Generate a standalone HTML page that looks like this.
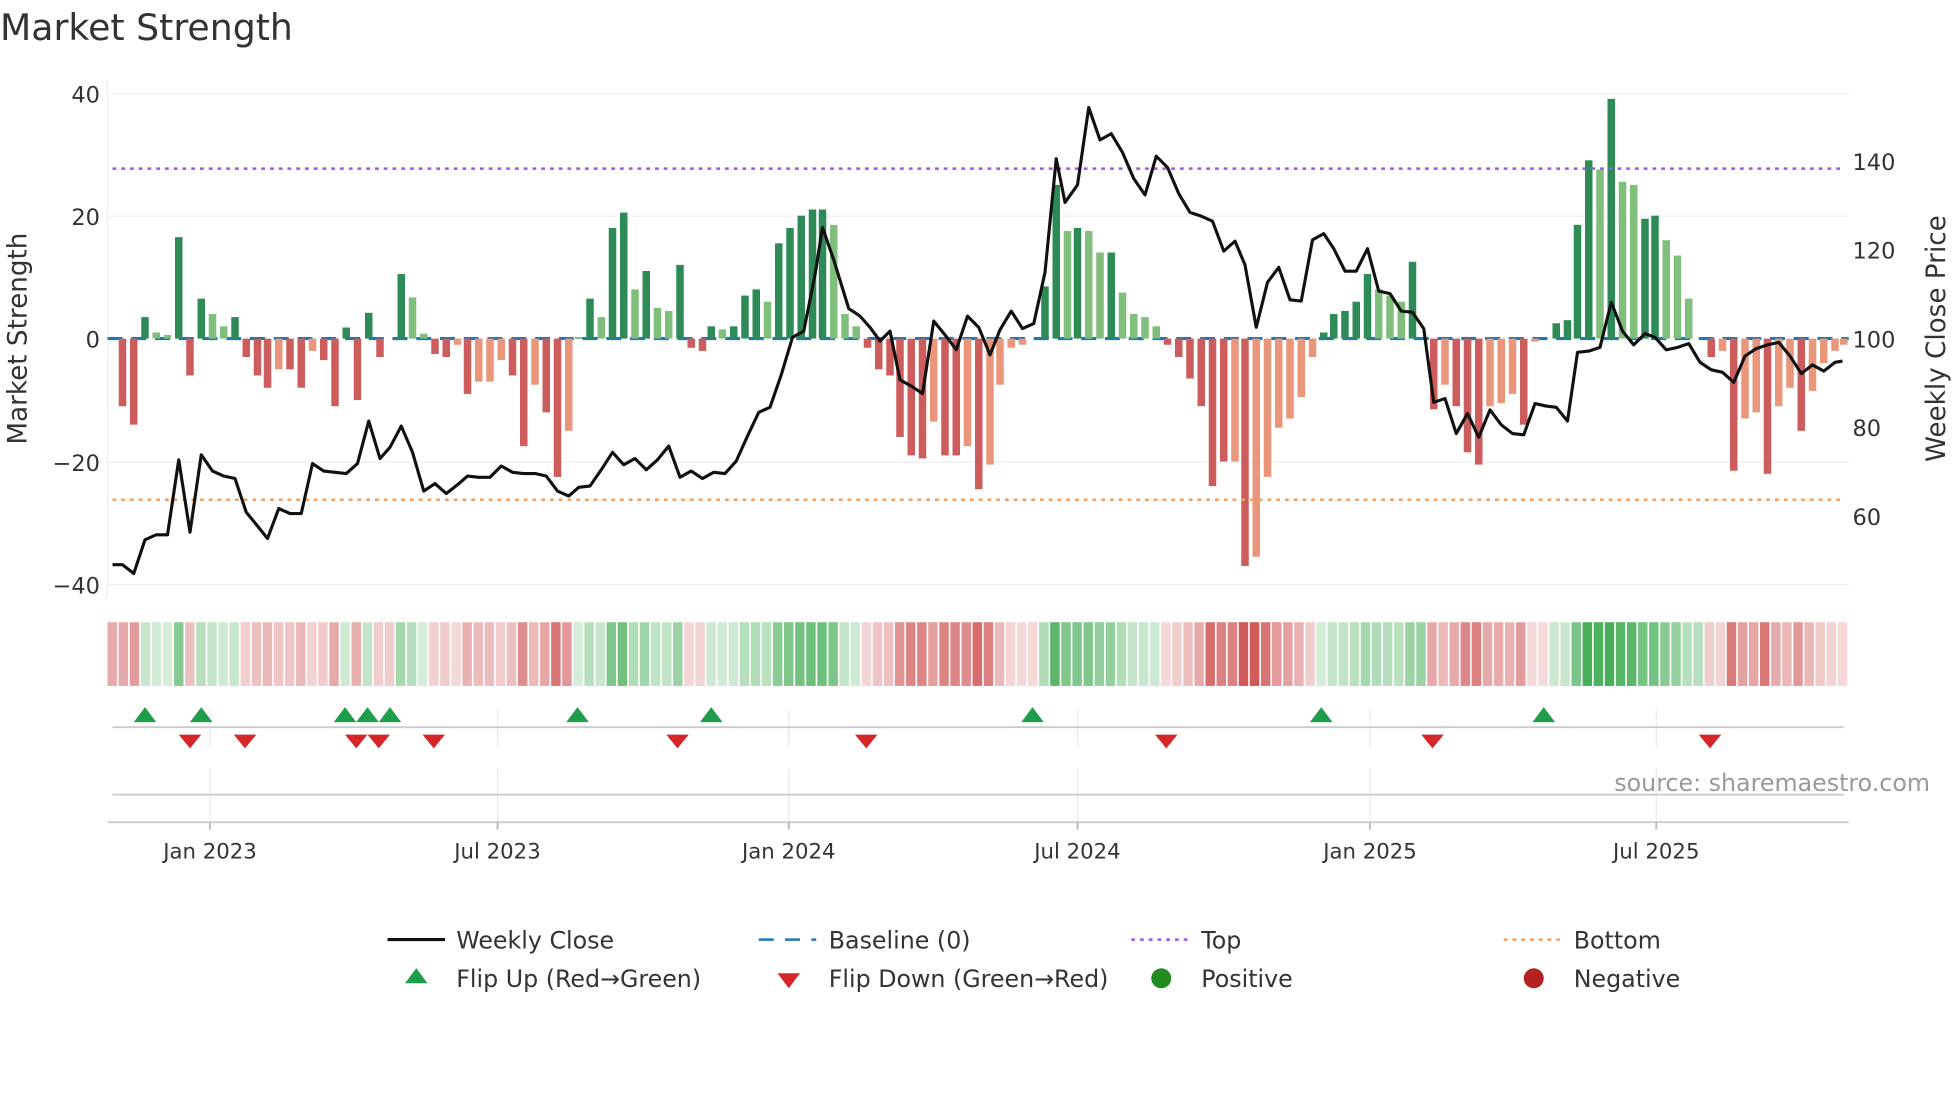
<!DOCTYPE html>
<html><head><meta charset="utf-8">
<style>
html,body{margin:0;padding:0;background:#fff;}
svg{display:block;font-family:"DejaVu Sans","Liberation Sans",sans-serif;}
</style></head>
<body>
<svg id="s" width="1960" height="1102" viewBox="0 0 1568 882" preserveAspectRatio="none" xmlns="http://www.w3.org/2000/svg">
<text x="0" y="32" font-size="29" fill="#333">Market Strength</text>
<g stroke="#eceef4" stroke-width="1">
<line x1="86" y1="75" x2="1479" y2="75"/><line x1="86" y1="173" x2="1479" y2="173"/>
<line x1="86" y1="370" x2="1479" y2="370"/><line x1="86" y1="468" x2="1479" y2="468"/>
<line x1="86" y1="65" x2="86" y2="478"/>
</g>
<g font-size="18" fill="#333" text-anchor="end">
<text x="80" y="82">40</text><text x="80" y="180">20</text><text x="80" y="278">0</text><text x="80" y="377">−20</text><text x="80" y="475">−40</text>
</g>
<g font-size="18" fill="#333">
<text x="1482" y="136">140</text><text x="1482" y="207">120</text><text x="1482" y="278">100</text><text x="1482" y="349">80</text><text x="1482" y="420">60</text>
</g>
<text transform="translate(21,271) rotate(-90)" font-size="21" fill="#333" text-anchor="middle">Market Strength</text>
<text transform="translate(1556,271) rotate(-90)" font-size="21" fill="#333" text-anchor="middle">Weekly Close Price</text>
<line x1="86" y1="271" x2="1479" y2="271" stroke="#1f77b4" stroke-width="2.5" stroke-dasharray="12,7"/>
<g id="bars"></g>
<line x1="90" y1="135" x2="1475" y2="135" stroke="#9b59e0" stroke-width="2" stroke-dasharray="3,4"/>
<line x1="90" y1="400" x2="1475" y2="400" stroke="#f0a060" stroke-width="2" stroke-dasharray="3,4"/>
<polyline id="price" fill="none" stroke="#111" stroke-width="2.5" stroke-linejoin="round"/>
<g id="heat"></g>
<g id="grid2" stroke="#e8eaf0" stroke-width="1"></g>
<line x1="90" y1="582" x2="1475" y2="582" stroke="#ccc" stroke-width="1.5"/>
<line x1="90" y1="636" x2="1475" y2="636" stroke="#ccc" stroke-width="1.5"/>
<line x1="86" y1="658" x2="1479" y2="658" stroke="#ccc" stroke-width="1.5"/>
<g id="marks"></g>
<text x="1544" y="633" font-size="19" fill="#999" text-anchor="end">source: sharemaestro.com</text>
<g id="ticks" font-size="17" fill="#333" text-anchor="middle"></g>
<g font-size="19" fill="#333">
<line x1="310" y1="752" x2="356" y2="752" stroke="#111" stroke-width="2.5"/><text x="365" y="759">Weekly Close</text>
<line x1="607" y1="752" x2="653" y2="752" stroke="#1f77b4" stroke-width="2" stroke-dasharray="12,9"/><text x="663" y="759">Baseline (0)</text>
<line x1="905" y1="752" x2="951" y2="752" stroke="#9b59e0" stroke-width="2" stroke-dasharray="3,4"/><text x="961" y="759">Top</text>
<line x1="1203" y1="752" x2="1249" y2="752" stroke="#f0a060" stroke-width="2" stroke-dasharray="3,4"/><text x="1259" y="759">Bottom</text>
<polygon points="333,775 324,787 342,787" fill="#1e9e4a"/><text x="365" y="790">Flip Up (Red→Green)</text>
<polygon points="622,779 640,779 631,791" fill="#d62728"/><text x="663" y="790">Flip Down (Green→Red)</text>
<circle cx="929" cy="783" r="8" fill="#228b22"/><text x="961" y="790">Positive</text>
<circle cx="1227" cy="783" r="8" fill="#b22222"/><text x="1259" y="790">Negative</text>
</g>
</svg>
<script>
var NS="http://www.w3.org/2000/svg";
function el(p,t,a){var e=document.createElementNS(NS,t);for(var k in a)e.setAttribute(k,a[k]);p.appendChild(e);return e;}
var B=[[98,-11,0],[107,-14,0],[116,3.5,0],[125,1,1],[134,0.6,1],[143,16.5,0],[152,-6,0],[161,6.5,0],[170,4,1],[179,2,1],[188,3.5,0],[197,-3,0],[206,-6,0],[214,-8,0],[223,-5,1],[232,-5,0],[241,-8,0],[250,-2,1],[259,-3.5,0],[268,-11,0],[277,1.8,0],[286,-10,0],[295,4.2,0],[304,-3,0],[321,10.5,0],[330,6.7,1],[339,0.8,1],[348,-2.5,0],[357,-3,0],[366,-1,1],[374,-9,0],[383,-7,1],[392,-7,1],[401,-3.5,1],[410,-6,0],[419,-17.5,0],[428,-7.5,1],[437,-12,0],[446,-22.5,0],[455,-15,1],[463,0.2,0],[472,6.5,0],[481,3.5,1],[490,18,0],[499,20.5,0],[508,8,1],[517,11,0],[526,5,1],[535,4.5,1],[544,12,0],[553,-1.5,0],[562,-2,0],[569,2,0],[578,1.5,1],[587,2,0],[596,7,0],[605,8,0],[614,6,1],[623,15.5,0],[632,18,0],[641,20,0],[650,21,0],[658,21,0],[667,18.5,1],[676,4,1],[685,2,1],[694,-1.5,0],[703,-5,0],[712,-6,0],[720,-16,0],[729,-19,0],[738,-19.5,0],[747,-13.5,1],[756,-19,0],[765,-19,0],[774,-17.5,1],[783,-24.5,0],[792,-20.5,1],[800,-7.5,1],[809,-1.5,1],[818,-1,1],[836,8.5,0],[845,25,0],[854,17.5,1],[862,18,0],[871,17.5,1],[880,14,1],[889,14,0],[898,7.5,1],[907,4,1],[916,3.5,1],[925,2,1],[934,-1,0],[943,-3,0],[952,-6.5,0],[961,-11,0],[970,-24,0],[979,-20,0],[988,-20,1],[996,-37,0],[1005,-35.5,1],[1014,-22.5,1],[1023,-14.5,1],[1032,-13,1],[1041,-9.5,1],[1050,-3,1],[1059,1,0],[1067,4,0],[1076,4.5,0],[1085,6,0],[1094,10.5,0],[1103,8,1],[1112,7,1],[1121,6,1],[1130,12.5,0],[1147,-11.5,0],[1156,-7.5,1],[1165,-11,0],[1174,-18.5,0],[1183,-20.5,0],[1192,-11,1],[1201,-10.5,1],[1210,-9,1],[1219,-14,0],[1228,-0.5,1],[1245,2.5,0],[1254,3,0],[1262,18.5,0],[1271,29,0],[1280,27.5,1],[1289,39,0],[1298,25.5,1],[1307,25,1],[1316,19.5,0],[1324,20,0],[1333,16,1],[1342,13.5,1],[1351,6.5,1],[1369,-3,0],[1378,-2,1],[1387,-21.5,0],[1396,-13,1],[1405,-12,1],[1414,-22,0],[1423,-11,1],[1432,-8,1],[1441,-15,0],[1450,-8.5,1],[1459,-4,1],[1468,-2,1],[1475,-1,1]];
var g=document.getElementById("bars");
B.forEach(function(b){if(!b[1])return;var v=b[1],h=Math.abs(v)*4.92,y=v>0?271-h:271;
var c=v>0?(b[2]?"#7fbf7b":"#2e8b57"):(b[2]?"#e9967a":"#cd5c5c");
el(g,"rect",{x:b[0]-3,y:y,width:6,height:h,fill:c});});
var P=[[90,452],[98,452],[107,459],[116,432],[125,428],[134,428],[143,368],[152,426],[161,364],[170,377],[179,381],[188,383],[197,410],[206,421],[214,431],[223,407],[232,411],[241,411],[250,371],[259,377],[268,378],[277,379],[286,371],[295,337],[304,367],[312,358],[321,341],[330,362],[339,393],[348,387],[357,395],[366,388],[374,381],[383,382],[392,382],[401,373],[410,378],[419,379],[428,379],[437,381],[446,393],[455,397],[463,390],[472,389],[481,376],[490,362],[499,372],[508,367],[517,376],[526,368],[535,357],[544,382],[553,377],[562,383],[571,378],[580,379],[589,369],[598,349],[607,330],[616,326],[625,300],[634,270],[643,265],[652,220],[658,182],[667,208],[679,247],[688,253],[696,262],[704,273],[712,265],[720,304],[729,309],[738,315],[747,257],[756,268],[765,280],[774,253],[783,262],[792,284],[800,264],[809,249],[818,263],[827,259],[836,218],[845,127],[852,162],[862,148],[871,86],[880,112],[889,107],[898,122],[907,143],[916,156],[925,125],[934,134],[943,155],[952,170],[961,173],[970,177],[979,201],[988,193],[996,212],[1005,262],[1014,226],[1023,214],[1032,240],[1041,241],[1050,192],[1059,187],[1067,199],[1076,217],[1085,217],[1094,199],[1103,233],[1112,235],[1121,249],[1130,250],[1139,263],[1147,322],[1156,319],[1165,347],[1174,331],[1183,350],[1192,328],[1201,340],[1210,347],[1219,348],[1228,323],[1237,325],[1245,326],[1254,337],[1262,282],[1271,281],[1280,278],[1289,242],[1298,265],[1307,276],[1316,267],[1324,270],[1333,280],[1342,278],[1351,275],[1360,290],[1369,296],[1378,298],[1387,306],[1396,285],[1405,279],[1414,276],[1423,274],[1432,285],[1441,299],[1450,292],[1459,297],[1468,290],[1474,289]];
document.getElementById("price").setAttribute("points",P.map(function(p){return p.join(",")}).join(" "));
var H=document.getElementById("heat"),n=157,w=(1479-86)/n;
for(var i=0;i<n;i++){var cx=86+w*(i+0.5),best=null,bd=1e9;
B.forEach(function(b){var d=Math.abs(b[0]-cx);if(d<bd&&b[1]){bd=d;best=b;}});
var v=best?best[1]:0;var a=Math.min(0.85,0.18+Math.abs(v)/30*0.7);
var c=v>=0?"rgba(40,160,60,"+a+")":"rgba(200,60,60,"+a+")";
el(H,"rect",{x:86+w*i,y:498,width:w-1.3,height:51,fill:c});}
var T=[[168,"Jan 2023"],[398,"Jul 2023"],[631,"Jan 2024"],[862,"Jul 2024"],[1096,"Jan 2025"],[1325,"Jul 2025"]];
var G=document.getElementById("grid2"),TK=document.getElementById("ticks");
T.forEach(function(t){el(G,"line",{x1:t[0],y1:568,x2:t[0],y2:598});el(G,"line",{x1:t[0],y1:615,x2:t[0],y2:658});
el(TK,"line",{x1:t[0],y1:658,x2:t[0],y2:664,stroke:"#bbb","stroke-width":1.5});
el(TK,"text",{x:t[0],y:687}).textContent=t[1];});
var M=document.getElementById("marks");
[116,161,276,294,312,462,569,826,1057,1235].forEach(function(x){el(M,"polygon",{points:(x)+",566 "+(x-9)+",578 "+(x+9)+",578",fill:"#1e9e4a"});});
[152,196,285,303,347,542,693,933,1146,1368].forEach(function(x){el(M,"polygon",{points:(x-9)+",588 "+(x+9)+",588 "+x+",599",fill:"#d62728"});});
</script>
</body></html>
